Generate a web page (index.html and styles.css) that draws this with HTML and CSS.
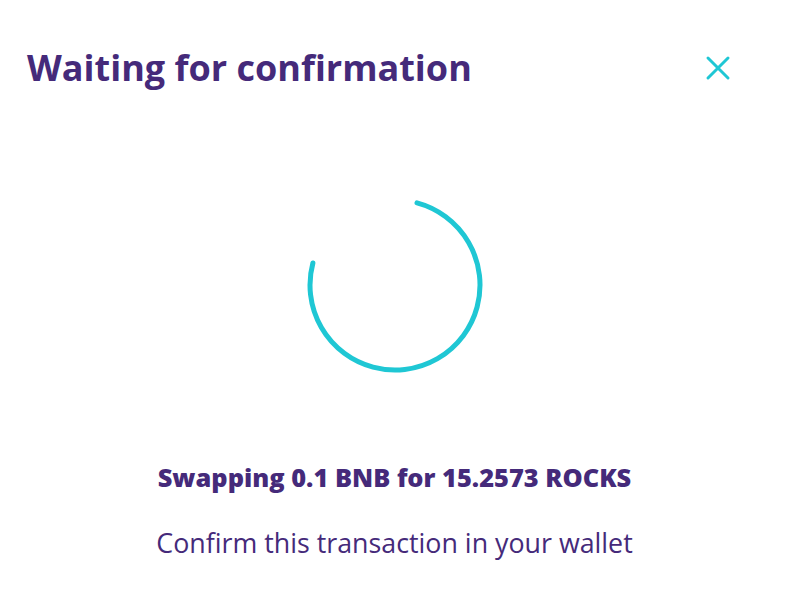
FILE: index.html
```html
<!DOCTYPE html>
<html>
<head>
<meta charset="utf-8">
<link rel="stylesheet" href="styles.css">
</head>
<body>
<div class="modal">
  <header class="head">
    <h2 class="title">Waiting for confirmation</h2>
    <button class="close" aria-label="Close">
      <svg width="26" height="26" viewBox="0 0 26 26"><path d="M3 3 L23 23 M23 3 L3 23" stroke="#1FC7D4" stroke-width="3" stroke-linecap="round" fill="none"/></svg>
    </button>
  </header>
  <main class="body">
    <svg class="spinner" width="180" height="180" viewBox="0 0 180 180">
      <path d="M112 7.9 A85 85 0 1 1 7.9 68" stroke="#1FC7D4" stroke-width="5" stroke-linecap="round" fill="none"/>
    </svg>
    <p class="swap">Swapping 0.1 BNB for 15.2573 ROCKS</p>
    <p class="confirm">Confirm this transaction in your wallet</p>
  </main>
</div>
</body>
</html>
```
FILE: styles.css
```css
html, body { margin: 0; padding: 0; background: #fff; }
body { font-family: "Open Sans", "Noto Sans", sans-serif; color: #452A7A; }
.modal { width: 789px; height: 591px; display: flex; flex-direction: column; }
.head { display: flex; align-items: center; justify-content: space-between; padding: 45px 58px 0 27px; height: 46px; }
.title { margin: 0; font-size: 36px; font-weight: 700; letter-spacing: 0; line-height: 46px; }
.close { background: none; border: 0; padding: 0; width: 26px; height: 26px; display: flex; }
.body { display: flex; flex-direction: column; align-items: center; padding-top: 104px; }
.spinner { display: block; }
.swap { margin: 87px 0 0; font-size: 25.4px; font-weight: 800; line-height: 30px; }
.confirm { margin: 36px 0 0; font-size: 26.8px; font-weight: 400; line-height: 30px; }
```
